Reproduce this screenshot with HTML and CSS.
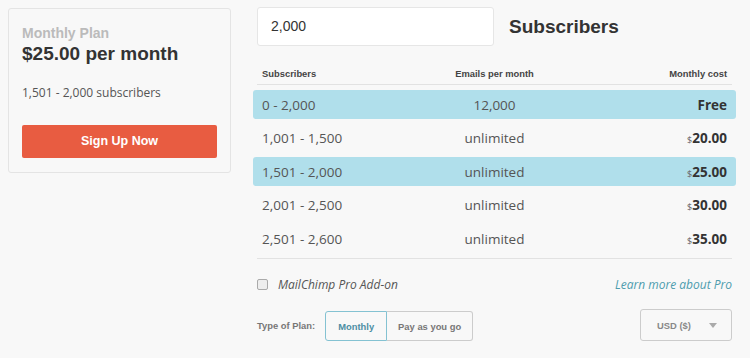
FILE: index.html
```html
<!DOCTYPE html>
<html lang="en">
<head>
    <meta charset="UTF-8">
    <title>Pricing</title>
    <link rel="stylesheet" href="styles.css">
</head>
<body>
<div class="page">
    <div class="plan-card">
        <div class="plan-type">Monthly Plan</div>
        <div class="plan-price">$25.00 per month</div>
        <div class="plan-range">1,501 - 2,000 subscribers</div>
        <a class="signup-btn">Sign Up Now</a>
    </div>

    <div class="calc">
        <div class="calc-top">
            <div class="sub-input">2,000</div>
            <h2 class="sub-title">Subscribers</h2>
        </div>

        <div class="tier-head">
            <span>Subscribers</span>
            <span class="mid">Emails per month</span>
            <span class="cost">Monthly cost</span>
        </div>

        <div class="tiers">
            <div class="tier active">
                <span>0 - 2,000</span>
                <span class="mid">12,000</span>
                <span class="cost"><b>Free</b></span>
            </div>
            <div class="tier">
                <span>1,001 - 1,500</span>
                <span class="mid">unlimited</span>
                <span class="cost"><small>$</small><b>20.00</b></span>
            </div>
            <div class="tier active">
                <span>1,501 - 2,000</span>
                <span class="mid">unlimited</span>
                <span class="cost"><small>$</small><b>25.00</b></span>
            </div>
            <div class="tier">
                <span>2,001 - 2,500</span>
                <span class="mid">unlimited</span>
                <span class="cost"><small>$</small><b>30.00</b></span>
            </div>
            <div class="tier">
                <span>2,501 - 2,600</span>
                <span class="mid">unlimited</span>
                <span class="cost"><small>$</small><b>35.00</b></span>
            </div>
        </div>

        <div class="pro-row">
            <label class="pro-check"><span class="box"></span>MailChimp Pro Add-on</label>
            <a class="pro-link">Learn more about Pro</a>
        </div>

        <div class="options">
            <span class="opt-label">Type of Plan:</span>
            <div class="seg">
                <span class="seg-btn on">Monthly</span>
                <span class="seg-btn">Pay as you go</span>
            </div>
            <div class="currency">
                <span>USD ($)</span>
                <svg width="8" height="5" viewBox="0 0 8 5"><path d="M0 0h8L4 5z" fill="#aaa"/></svg>
            </div>
        </div>
    </div>
</div>
</body>
</html>
```

FILE: styles.css
```css
body {
    margin: 0;
    background: #f8f8f8;
    font-family: "Liberation Sans", Arial, sans-serif;
    color: #333;
}
.page {
    display: flex;
    align-items: flex-start;
    padding: 8px 14px 0 8px;
}

/* left summary card */
.plan-card {
    width: 195px;
    padding: 16px 13px 14px;
    border: 1px solid #e4e4e4;
    border-radius: 3px;
    background: #f8f8f8;
}
.plan-type {
    font-size: 14px;
    font-weight: bold;
    color: #bbb;
    line-height: 16px;
}
.plan-price {
    font-size: 19px;
    font-weight: bold;
    color: #333;
    line-height: 22px;
    margin-top: 2px;
}
.plan-range {
    font-family: "Open Sans", sans-serif;
    font-size: 12px;
    color: #555;
    margin-top: 19px;
    line-height: 18px;
}
.signup-btn {
    display: block;
    margin-top: 23px;
    height: 33px;
    line-height: 33px;
    border-radius: 2px;
    background: #e85c41;
    color: #fff;
    text-align: center;
    font-size: 12.5px;
    font-weight: bold;
}

/* right calculator */
.calc {
    flex: 1;
    margin-left: 22px;
    margin-top: -1px;
}
.calc-top {
    display: flex;
    align-items: center;
    padding-left: 4px;
}
.sub-input {
    width: 222px;
    height: 37px;
    line-height: 37px;
    padding-left: 13px;
    background: #fff;
    border: 1px solid #e6e6e6;
    border-radius: 3px;
    font-size: 14px;
    color: #333;
}
.sub-title {
    margin: 0 0 0 15px;
    font-size: 19px;
    font-weight: bold;
    color: #333;
}

.tier-head,
.tier {
    display: grid;
    grid-template-columns: 1fr auto 1fr;
    align-items: center;
}
.mid { text-align: center; }
.cost { text-align: right; }

.tier-head {
    margin: 16px 4px 0;
    padding: 0 5px;
    height: 22px;
    border-bottom: 1px solid #e2e2e2;
    font-size: 9.4px;
    font-weight: bold;
    color: #444;
}
.tiers {
    display: flex;
    flex-direction: column;
    gap: 4.5px;
    margin-top: 5px;
}
.tier {
    height: 29px;
    padding: 0 9px;
    border-radius: 3px;
    font-family: "Open Sans", sans-serif;
    font-size: 13.5px;
    color: #555;
}
.tier.active { background: #b0dfeb; }
.tier b {
    font-weight: bold;
    color: #333;
}
.tier small {
    font-size: 9px;
    color: #666;
}

.pro-row {
    display: flex;
    justify-content: space-between;
    align-items: center;
    margin: 5px 4px 0;
    padding-top: 17px;
    border-top: 1px solid #e2e2e2;
    font-family: "Open Sans", sans-serif;
    font-size: 12px;
    font-style: italic;
}
.pro-check {
    display: flex;
    align-items: center;
    color: #555;
}
.box {
    width: 9px;
    height: 9px;
    margin-right: 10px;
    border: 1px solid #aaa;
    border-radius: 2px;
    background: #eee;
}
.pro-link { color: #4d9cae; }

.options {
    display: flex;
    align-items: center;
    margin: 16px 4px 0;
    font-size: 9.4px;
    font-weight: bold;
}
.opt-label {
    color: #777;
    margin-right: 10px;
}
.seg {
    display: flex;
    height: 30px;
    margin-top: 2px;
}
.seg-btn {
    display: flex;
    align-items: center;
    padding: 0 11px;
    border: 1px solid #ccc;
    border-left: none;
    border-radius: 0 3px 3px 0;
    color: #777;
}
.seg-btn.on {
    padding: 0 12px;
    border: 1px solid #84c2d2;
    border-radius: 3px 0 0 3px;
    color: #4d8ea4;
}
.currency {
    margin-left: auto;
    height: 30px;
    display: flex;
    align-items: center;
    justify-content: space-between;
    padding: 0 14px 0 16px;
    border: 1px solid #ccc;
    border-radius: 3px;
    color: #888;
    width: 60px;
}
```
